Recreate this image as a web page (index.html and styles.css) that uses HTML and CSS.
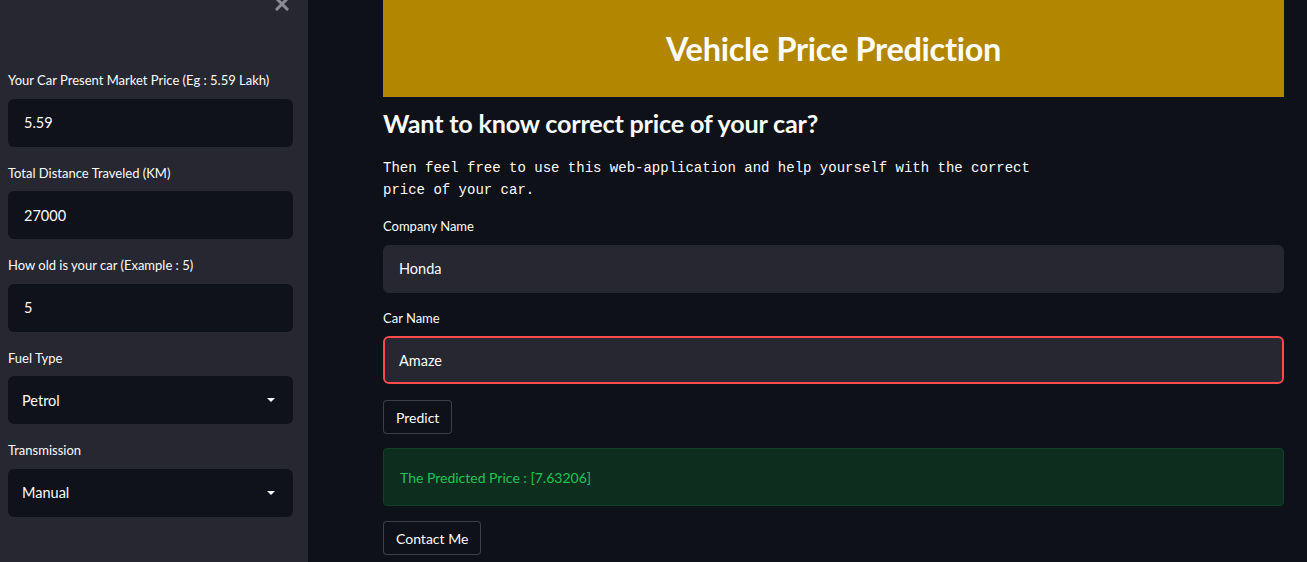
FILE: index.html
```html
<!DOCTYPE html>
<html>
<head>
<meta charset="utf-8">
<link rel="stylesheet" href="styles.css">
</head>
<body>
<div class="app">
  <aside class="sidebar">
    <button class="close" aria-label="close">
      <svg width="14" height="14" viewBox="0 0 14 14"><path d="M2 2 L12 12 M12 2 L2 12" stroke="#8b8b91" stroke-width="3" stroke-linecap="square"/></svg>
    </button>
    <div class="side-widgets">
      <div class="widget">
        <label class="label">Your Car Present Market Price (Eg : 5.59 Lakh)</label>
        <div class="field dark">5.59</div>
      </div>
      <div class="widget">
        <label class="label">Total Distance Traveled (KM)</label>
        <div class="field dark">27000</div>
      </div>
      <div class="widget">
        <label class="label">How old is your car (Example : 5)</label>
        <div class="field dark">5</div>
      </div>
      <div class="widget">
        <label class="label">Fuel Type</label>
        <div class="field dark select"><span>Petrol</span><span class="caret"></span></div>
      </div>
      <div class="widget">
        <label class="label">Transmission</label>
        <div class="field dark select"><span>Manual</span><span class="caret"></span></div>
      </div>
    </div>
  </aside>
  <main class="main">
    <div class="content">
      <div class="banner"><h1>Vehicle Price Prediction</h1></div>
      <h3 class="subtitle">Want to know correct price of your car?</h3>
      <p class="mono">Then feel free to use this web-application and help yourself with the correct price of your car.</p>
      <div class="widget main-widget">
        <label class="label">Company Name</label>
        <div class="field light">Honda</div>
      </div>
      <div class="widget main-widget">
        <label class="label">Car Name</label>
        <div class="field light focused">Amaze</div>
      </div>
      <button class="btn predict">Predict</button>
      <div class="success">The Predicted Price : [7.63206]</div>
      <button class="btn contact">Contact Me</button>
    </div>
  </main>
</div>
</body>
</html>
```

FILE: styles.css
```css
* { box-sizing: border-box; }
html, body { margin: 0; padding: 0; height: 100%; }
body {
  background: #0e1117;
  color: #fafafa;
  font-family: "Lato", "Noto Sans", sans-serif;
  overflow: hidden;
}
.app {
  display: flex;
  height: 562px;
}
.sidebar {
  position: relative;
  width: 308px;
  flex: none;
  background: #262730;
  padding: 70px 15px 0 8px;
}
.close {
  position: absolute;
  top: -3px;
  left: 275px;
  background: none;
  border: 0;
  padding: 0;
  width: 14px;
  height: 14px;
}
.side-widgets {
  display: flex;
  flex-direction: column;
  gap: 16px;
}
.widget {
  display: flex;
  flex-direction: column;
}
.label {
  font-size: 13px;
  line-height: 20px;
  height: 20px;
  margin-bottom: 8.5px;
  color: #fafafa;
}
.field {
  height: 48px;
  border-radius: 6px;
  display: flex;
  align-items: center;
  font-size: 14.5px;
  color: #fafafa;
}
.field.dark {
  background: #0f121a;
  padding-left: 16px;
}
.select {
  justify-content: space-between;
  padding-left: 14px !important;
  padding-right: 18px;
}
.caret {
  width: 0;
  height: 0;
  border-left: 4px solid transparent;
  border-right: 4px solid transparent;
  border-top: 4px solid #fafafa;
}
.main {
  flex: 1;
  padding: 0 23px 0 75px;
}
.content {
  display: flex;
  flex-direction: column;
  align-items: flex-start;
}
.banner {
  align-self: stretch;
  height: 97px;
  background: #b38600;
  display: flex;
  align-items: center;
  justify-content: center;
}
.banner h1 {
  margin: 0;
  font-size: 32.5px;
  font-weight: 700;
  color: #ffffff;
  letter-spacing: -0.3px;
}
.subtitle {
  margin: 8px 0 0;
  font-size: 25.2px;
  line-height: 36px;
  font-weight: 700;
  letter-spacing: -0.2px;
}
.mono {
  margin: 16px 0 0;
  max-width: 680px;
  font-family: "Liberation Mono", "DejaVu Sans Mono", monospace;
  font-size: 14px;
  line-height: 22px;
}
.main-widget {
  align-self: stretch;
  margin-top: 15px;
}
.main-widget + .main-widget { margin-top: 15px; }
.field.light {
  background: #262730;
  padding-left: 16px;
}
.field.focused {
  border: 2px solid #ff4b4b;
  padding-left: 14px;
  height: 48px;
}
.btn {
  font-family: inherit;
  font-size: 14px;
  color: #fafafa;
  background: #0e1117;
  border: 1px solid rgba(250, 250, 250, 0.2);
  border-radius: 4px;
  height: 34px;
  padding: 0 12px;
}
.predict { margin-top: 16px; height: 34px; }
.success {
  align-self: stretch;
  margin-top: 14px;
  height: 58px;
  background: #0d2e1f;
  border: 1px solid #123f26;
  border-radius: 4px;
  display: flex;
  align-items: center;
  padding-left: 16px;
  color: #21c354;
  font-size: 14px;
}
.contact { margin-top: 15px; }
```
